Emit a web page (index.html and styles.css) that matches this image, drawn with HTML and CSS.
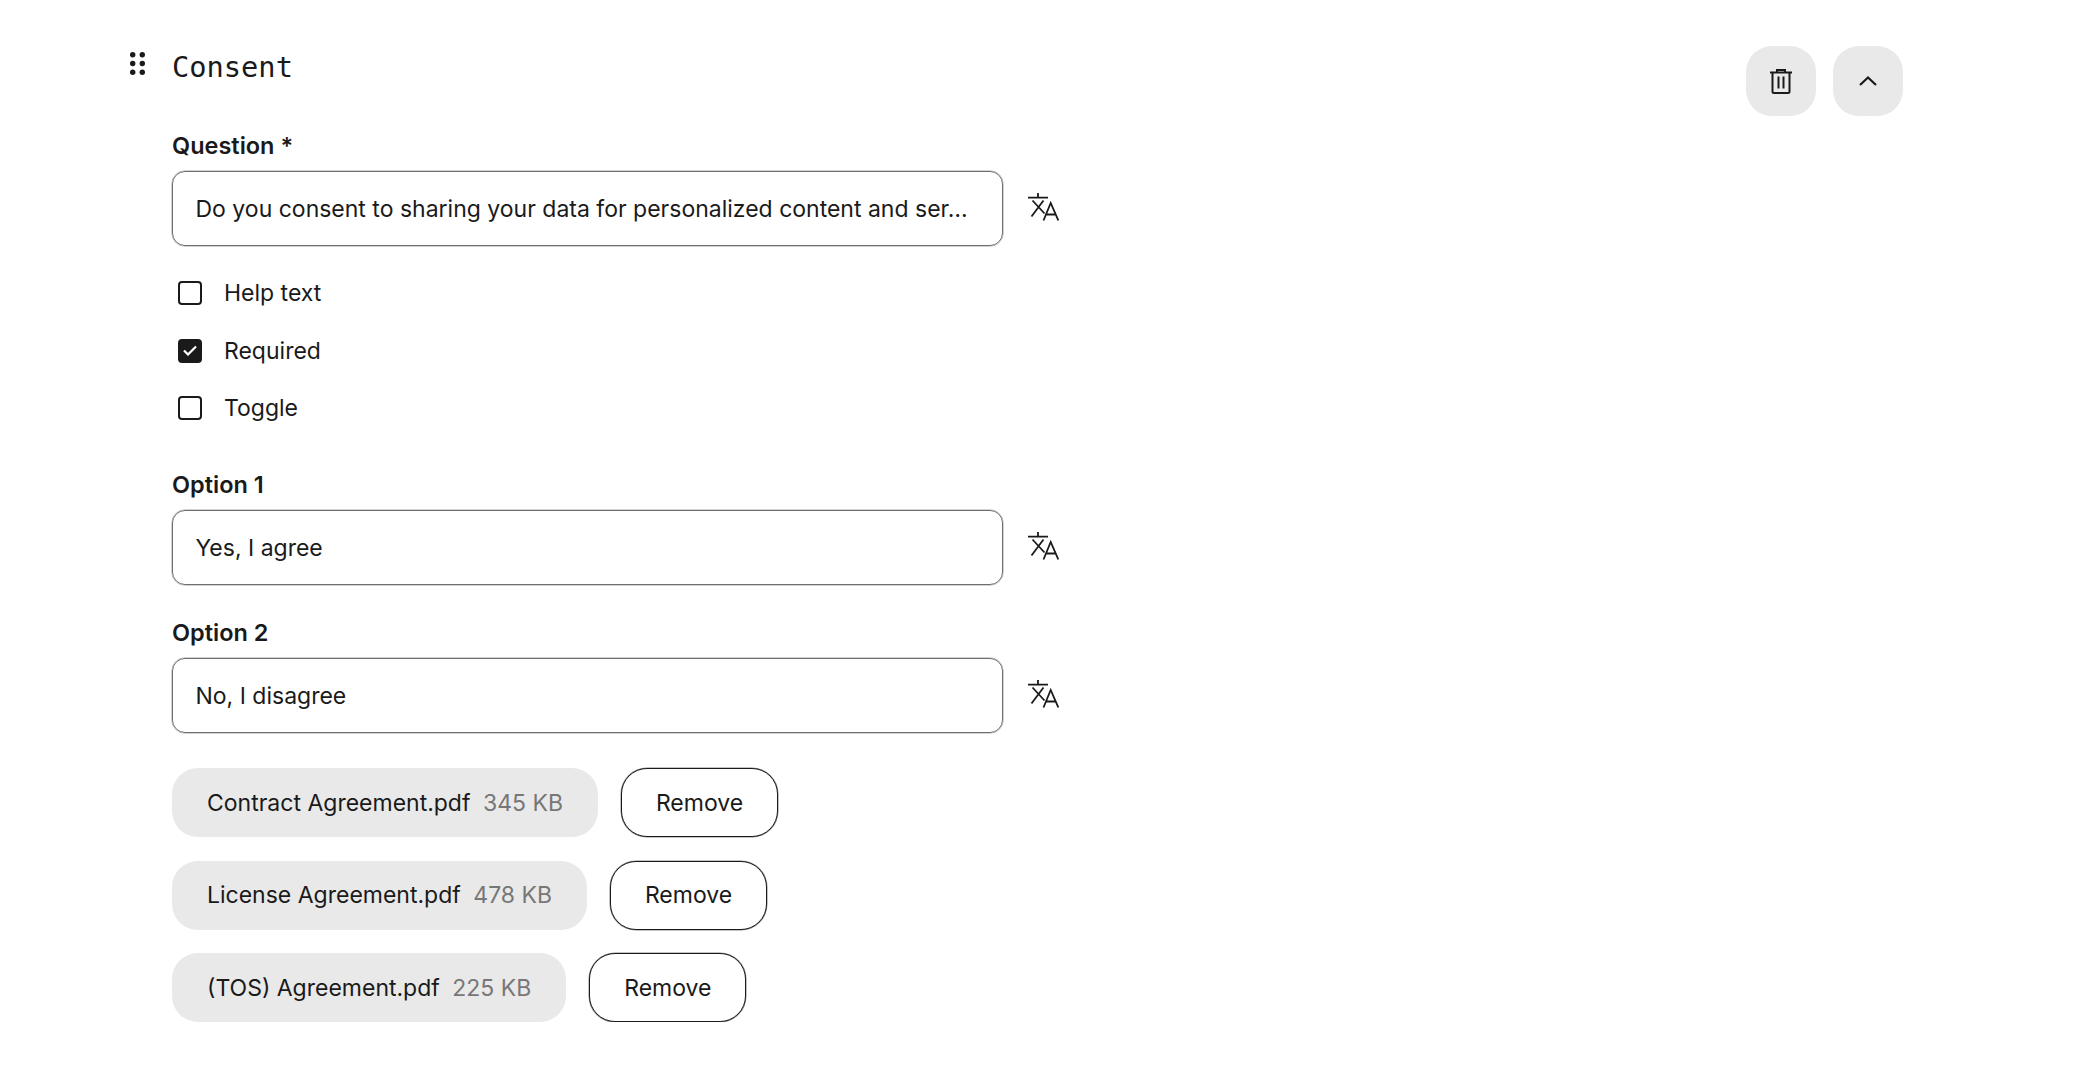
FILE: index.html
```html
<!doctype html>
<html>
<head>
<meta charset="UTF-8">
<title>Consent</title>
<link rel="stylesheet" href="styles.css">
</head>
<body>
<div class="card">
  <svg class="drag" width="15" height="23" viewBox="0 0 15 23">
    <circle cx="2.7" cy="2.7" r="2.7"/><circle cx="12.3" cy="2.7" r="2.7"/>
    <circle cx="2.7" cy="11.5" r="2.7"/><circle cx="12.3" cy="11.5" r="2.7"/>
    <circle cx="2.7" cy="20.3" r="2.7"/><circle cx="12.3" cy="20.3" r="2.7"/>
  </svg>
  <div class="content">
    <div class="head">
      <h2 class="title">Consent</h2>
      <div class="actions">
        <button class="round-btn">
          <svg width="22" height="25" viewBox="0 0 22 25" fill="none" stroke="#1a1a1a" stroke-width="2">
            <path d="M0 3.500h22"/>
            <path d="M7 3V1h8v2"/>
            <path d="M2.500 3.500V22.500a1.500 1.500 0 0 0 1.500 1.500h14a1.500 1.500 0 0 0 1.500-1.500V3.500"/>
            <path d="M8.500 7.500v12M13.500 7.500v12"/>
          </svg>
        </button>
        <button class="round-btn">
          <svg width="20" height="12" viewBox="0 0 20 12" fill="none" stroke="#1a1a1a" stroke-width="2.2">
            <path d="M2 10l8-7.500 8 7.500"/>
          </svg>
        </button>
      </div>
    </div>

    <label class="field-label">Question *</label>
    <div class="field-row">
      <div class="input">Do you consent to sharing your data for personalized content and ser…</div>
      <svg class="translate" width="31" height="28" viewBox="0 0 31 28" fill="none" stroke="#1a1a1a" stroke-width="1.8">
        <path d="M0 4.700h20M10 0v4.700M4.500 7.500L16.500 20.500M15.500 7.500L3.500 23.500"/>
        <path d="M15.500 27.500L22.700 10l7.600 17.500M18 21.500h10"/>
      </svg>
    </div>

    <div class="checks">
      <div class="check-row"><span class="box"></span>Help text</div>
      <div class="check-row">
        <span class="box checked">
          <svg width="14" height="11" viewBox="0 0 14 11" fill="none" stroke="#fff" stroke-width="2.200"><path d="M1 5.500l4 4 8-8"/></svg>
        </span>Required
      </div>
      <div class="check-row"><span class="box"></span>Toggle</div>
    </div>

    <label class="field-label">Option 1</label>
    <div class="field-row">
      <div class="input">Yes, I agree</div>
      <svg class="translate" width="31" height="28" viewBox="0 0 31 28" fill="none" stroke="#1a1a1a" stroke-width="1.8">
        <path d="M0 4.700h20M10 0v4.700M4.500 7.500L16.500 20.500M15.500 7.500L3.500 23.500"/>
        <path d="M15.500 27.500L22.700 10l7.600 17.500M18 21.500h10"/>
      </svg>
    </div>

    <label class="field-label next">Option 2</label>
    <div class="field-row">
      <div class="input">No, I disagree</div>
      <svg class="translate" width="31" height="28" viewBox="0 0 31 28" fill="none" stroke="#1a1a1a" stroke-width="1.8">
        <path d="M0 4.700h20M10 0v4.700M4.500 7.500L16.500 20.500M15.500 7.500L3.500 23.500"/>
        <path d="M15.500 27.500L22.700 10l7.600 17.500M18 21.500h10"/>
      </svg>
    </div>

    <div class="files">
      <div class="file-row">
        <div class="chip">Contract Agreement.pdf<span class="size">345 KB</span></div>
        <button class="remove">Remove</button>
      </div>
      <div class="file-row">
        <div class="chip">License Agreement.pdf<span class="size">478 KB</span></div>
        <button class="remove">Remove</button>
      </div>
      <div class="file-row">
        <div class="chip">(TOS) Agreement.pdf<span class="size">225 KB</span></div>
        <button class="remove">Remove</button>
      </div>
    </div>
  </div>
</div>
</body>
</html>
```

FILE: styles.css
```css
html, body {
	margin: 0;
	background: #fff;
}

body {
	font-family: Inter, "Liberation Sans", sans-serif;
	font-size: 23px;
	color: #1a1a1a;
}

.card {
	display: flex;
	align-items: flex-start;
	padding: 46px 171px 0 130px;
}

.drag {
	flex: none;
	margin-top: 6px;
	fill: #1a1a1a;
}

.content {
	flex: 1;
	margin-left: 27px;
}

.head {
	display: flex;
	justify-content: space-between;
	align-items: flex-start;
	height: 86px;
}

.title {
	margin: 1px 0 0;
	font-family: "DejaVu Sans Mono", monospace;
	font-size: 28.700px;
	font-weight: 400;
	line-height: 40px;
}

.actions {
	display: flex;
	gap: 17px;
}

.round-btn {
	display: flex;
	align-items: center;
	justify-content: center;
	width: 70px;
	height: 70px;
	padding: 0;
	border: none;
	border-radius: 26px;
	background: #e9e9e9;
}

.field-label {
	display: block;
	font-weight: 600;
	line-height: 27px;
	font-size: 23.500px;
	margin-bottom: 12px;
}

.field-label.next {
	margin-top: 34px;
}

.field-row {
	display: flex;
	align-items: center;
	gap: 25px;
}

.input {
	box-sizing: border-box;
	width: 831px;
	height: 75px;
	padding: 1px 20px 0 22.500px;
	border: 1px solid #6e6e6e;
	border-radius: 13px;
	box-shadow: 0 0 0 0.5px #a8a8a8;
	line-height: 72px;
	white-space: nowrap;
	overflow: hidden;
}

.translate {
	flex: none;
	margin-bottom: 3px;
}

.checks {
	display: flex;
	flex-direction: column;
	gap: 23.700px;
	margin: 30px 0 46px;
}

.check-row {
	display: flex;
	align-items: center;
	height: 34px;
	padding-left: 6px;
}

.box {
	display: flex;
	align-items: center;
	justify-content: center;
	box-sizing: border-box;
	width: 24px;
	height: 24px;
	margin-right: 22px;
	border: 2px solid #1a1a1a;
	border-radius: 4px;
}

.box.checked {
	background: #1a1a1a;
}

.files {
	display: flex;
	flex-direction: column;
	gap: 23.500px;
	margin-top: 35px;
}

.file-row {
	display: flex;
	align-items: center;
	gap: 23px;
}

.chip {
	display: flex;
	align-items: center;
	height: 69px;
	padding: 0 35px;
	border-radius: 26px;
	background: #e9e9e9;
}

.size {
	margin-left: 12.500px;
	color: #777;
}

.remove {
	box-sizing: border-box;
	width: 157px;
	height: 69px;
	padding: 0;
	border: 1px solid #1a1a1a;
	border-radius: 26px;
	box-shadow: 0 0 0 0.5px #8a8a8a;
	background: #fff;
	color: #1a1a1a;
	font: inherit;
}
```
